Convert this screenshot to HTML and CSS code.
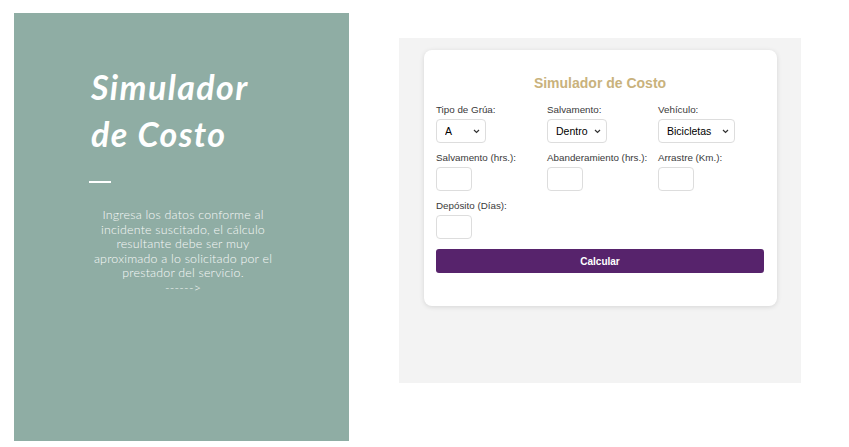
FILE: index.html
```html
<!DOCTYPE html>
<html lang="es">
<head>
  <meta charset="UTF-8">
  <meta name="viewport" content="width=device-width, initial-scale=1.0">
  <title>Simulador de Costo</title>
  <link rel="stylesheet" href="styles.css">
</head>
<body>
  <div class="page">
    <div class="intro">
      <h1 class="intro-title">Simulador<br>de Costo</h1>
      <div class="intro-rule"></div>
      <p class="intro-text">
        Ingresa los datos conforme al incidente suscitado, el cálculo resultante debe ser muy aproximado a lo solicitado por el prestador del servicio.<br>------&gt;
      </p>
    </div>

    <div class="panel">
      <div class="card">
        <h2 class="card-title">Simulador de Costo</h2>
        <form class="form-grid">
          <div class="field">
            <label for="tipo">Tipo de Grúa:</label>
            <select id="tipo" class="select sel-a">
              <option>A</option>
              <option>B</option>
              <option>C</option>
            </select>
          </div>
          <div class="field">
            <label for="salv">Salvamento:</label>
            <select id="salv" class="select sel-dentro">
              <option>Dentro</option>
              <option>Fuera</option>
            </select>
          </div>
          <div class="field">
            <label for="veh">Vehículo:</label>
            <select id="veh" class="select sel-veh">
              <option>Bicicletas</option>
              <option>Motos</option>
              <option>Autos</option>
            </select>
          </div>

          <div class="field">
            <label for="hrs">Salvamento (hrs.):</label>
            <input type="text" id="hrs" class="input-small">
          </div>
          <div class="field">
            <label for="aband">Abanderamiento (hrs.):</label>
            <input type="text" id="aband" class="input-small">
          </div>
          <div class="field">
            <label for="arr">Arrastre (Km.):</label>
            <input type="text" id="arr" class="input-small">
          </div>

          <div class="field">
            <label for="dep">Depósito (Días):</label>
            <input type="text" id="dep" class="input-small">
          </div>

          <button type="button" class="calc-button">Calcular</button>
        </form>
      </div>
    </div>
  </div>
</body>
</html>
```

FILE: styles.css
```css
* {
  box-sizing: border-box;
  margin: 0;
  padding: 0;
}

body {
  background: #ffffff;
  font-family: 'Liberation Sans', Arial, sans-serif;
}

.page {
  display: flex;
  align-items: flex-start;
  gap: 50px;
  padding: 13px 0 0 14px;
}

.intro {
  width: 335px;
  height: 428px;
  background: #8fada4;
  padding: 50px 74px 0 77px;
  color: #ffffff;
}

.intro-title {
  font-family: 'Lato', sans-serif;
  font-style: italic;
  font-weight: 700;
  font-size: 34px;
  line-height: 47px;
  letter-spacing: 1.4px;
}

.intro-rule {
  width: 22px;
  height: 2px;
  background: #ffffff;
  margin: 24px 0 0 -2px;
}

.intro-text {
  margin-top: 25px;
  font-family: 'Lato', sans-serif;
  font-weight: 300;
  font-size: 12.4px;
  line-height: 14.6px;
  text-align: center;
  color: #f6f8f7;
  letter-spacing: 0.2px;
}

.panel {
  margin-top: 25px;
  width: 402px;
  height: 345px;
  background: #f3f3f3;
  padding: 12px 24px 0 25px;
}

.card {
  background: #ffffff;
  border-radius: 8px;
  box-shadow: 0 1px 5px rgba(0, 0, 0, 0.12);
  padding: 25px 13px 33px 12px;
}

.card-title {
  text-align: center;
  color: #c9b27c;
  font-size: 14px;
  font-weight: 700;
  line-height: 16px;
  margin-bottom: 12px;
}

.form-grid {
  display: grid;
  grid-template-columns: 111px 111px 1fr;
  row-gap: 8px;
}

.field {
  display: flex;
  flex-direction: column;
  align-items: flex-start;
  gap: 3px;
}

.field label {
  font-size: 9.8px;
  line-height: 13px;
  color: #3a3a3a;
  white-space: nowrap;
}

.select {
  appearance: none;
  -webkit-appearance: none;
  height: 24px;
  font-family: 'Liberation Sans', Arial, sans-serif;
  font-size: 10.5px;
  color: #000000;
  background-color: #ffffff;
  background-image: url("data:image/svg+xml,%3Csvg xmlns='http://www.w3.org/2000/svg' width='7' height='5' viewBox='0 0 7 5'%3E%3Cpath d='M1 1l2.5 2.5 2.5-2.5' fill='none' stroke='%23333' stroke-width='1.2'/%3E%3C/svg%3E");
  background-repeat: no-repeat;
  background-position: right 5px center;
  border: 1px solid #dddddd;
  border-radius: 4px;
  padding: 0 12px 0 8px;
  outline: none;
}

.sel-a {
  width: 50px;
}

.sel-dentro {
  width: 60px;
}

.sel-veh {
  width: 77px;
}

.input-small {
  width: 36px;
  height: 24px;
  border: 1px solid #dddddd;
  border-radius: 4px;
  background: #ffffff;
  outline: none;
}

.calc-button {
  grid-column: 1 / -1;
  margin-top: 2px;
  height: 24px;
  background: #57236c;
  color: #ffffff;
  border: none;
  border-radius: 3px;
  font-family: 'Liberation Sans', Arial, sans-serif;
  font-size: 10px;
  font-weight: 700;
  cursor: pointer;
}
```
